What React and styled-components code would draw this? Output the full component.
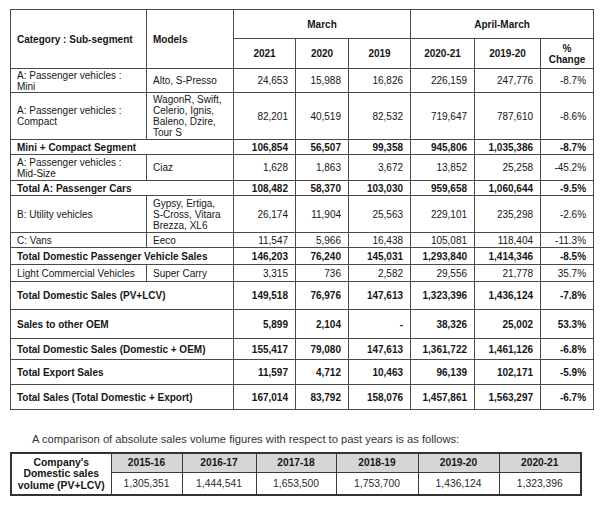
import React from 'react'
import styled, { createGlobalStyle } from 'styled-components'

const GlobalStyle = createGlobalStyle`
    body {
        margin: 0;
        background: #ffffff;
        font-family: "Liberation Sans", Arial, sans-serif;
        color: #161616;
    }
`

const Page = styled.div`
    padding: 9px 0 0 10px;
    width: 590px;
`

const SalesTable = styled.table`
    border-collapse: collapse;
    table-layout: fixed;
    width: 583px;
    font-size: 10px;
    line-height: 1.1;
    border: 1px solid #3a3a3a;
`

const HeadCell = styled.th`
    border: 1px solid #4a4a4a;
    font-weight: bold;
    text-align: ${props => props.$align || 'center'};
    padding: 0 6px;
    vertical-align: middle;
    white-space: pre-line;
`

const Row = styled.tr`
    height: ${props => props.$h}px;
`

const Cell = styled.td`
    border: 1px solid #4a4a4a;
    padding: ${props => props.$align === 'right' ? '0 7px 0 4px' : '0 6px'};
    text-align: ${props => props.$align || 'left'};
    font-weight: ${props => props.$bold ? 'bold' : 'normal'};
    vertical-align: middle;
    white-space: pre-line;
`

const Note = styled.p`
    margin: 23px 0 7px 22px;
    font-size: 11.2px;
    color: #333333;
`

const VolumeTable = styled.table`
    border-collapse: collapse;
    table-layout: fixed;
    width: 570px;
    font-size: 10.3px;
    line-height: 1.1;
    border: 2px solid #333333;
`

const VolHead = styled.th`
    border: 1px solid #3a3a3a;
    background: ${props => props.$shade ? '#d6d6d6' : '#ffffff'};
    font-size: ${props => props.$shade ? '10.2px' : '10.4px'};
    font-weight: bold;
    text-align: center;
    padding: 0 2px;
    height: 18px;
`

const VolCell = styled.td`
    border: 1px solid #3a3a3a;
    text-align: center;
    height: 19px;
    color: #2a2a2a;
`

const colWidths = [136, 87, 62, 53, 62, 64, 66, 53]

const rows = [
    { cat: 'A: Passenger vehicles :\nMini', model: 'Alto, S-Presso', v: ['24,653', '15,988', '16,826', '226,159', '247,776', '-8.7%'], h: 24 },
    { cat: 'A: Passenger vehicles :\nCompact', model: 'WagonR, Swift,\nCelerio, Ignis,\nBaleno, Dzire,\nTour S', v: ['82,201', '40,519', '82,532', '719,647', '787,610', '-8.6%'], h: 47 },
    { label: 'Mini + Compact Segment', v: ['106,854', '56,507', '99,358', '945,806', '1,035,386', '-8.7%'], h: 15 },
    { cat: 'A: Passenger vehicles :\nMid-Size', model: 'Ciaz', v: ['1,628', '1,863', '3,672', '13,852', '25,258', '-45.2%'], h: 26 },
    { label: 'Total A: Passenger Cars', v: ['108,482', '58,370', '103,030', '959,658', '1,060,644', '-9.5%'], h: 15 },
    { cat: 'B: Utility vehicles', model: 'Gypsy, Ertiga,\nS-Cross, Vitara\nBrezza, XL6', v: ['26,174', '11,904', '25,563', '229,101', '235,298', '-2.6%'], h: 37 },
    { cat: 'C: Vans', model: 'Eeco', v: ['11,547', '5,966', '16,438', '105,081', '118,404', '-11.3%'], h: 15 },
    { label: 'Total Domestic Passenger Vehicle Sales', v: ['146,203', '76,240', '145,031', '1,293,840', '1,414,346', '-8.5%'], h: 17 },
    { cat: 'Light Commercial Vehicles', model: 'Super Carry', v: ['3,315', '736', '2,582', '29,556', '21,778', '35.7%'], h: 17 },
    { label: 'Total Domestic Sales (PV+LCV)', v: ['149,518', '76,976', '147,613', '1,323,396', '1,436,124', '-7.8%'], h: 28 },
    { label: 'Sales to other OEM', v: ['5,899', '2,104', '-', '38,326', '25,002', '53.3%'], h: 29 },
    { label: 'Total Domestic Sales (Domestic + OEM)', v: ['155,417', '79,080', '147,613', '1,361,722', '1,461,126', '-6.8%'], h: 21 },
    { label: 'Total Export Sales', v: ['11,597', '4,712', '10,463', '96,139', '102,171', '-5.9%'], h: 25 },
    { label: 'Total Sales (Total Domestic + Export)', v: ['167,014', '83,792', '158,076', '1,457,861', '1,563,297', '-6.7%'], h: 25 },
]

const volumes = [
    ['2015-16', '1,305,351'],
    ['2016-17', '1,444,541'],
    ['2017-18', '1,653,500'],
    ['2018-19', '1,753,700'],
    ['2019-20', '1,436,124'],
    ['2020-21', '1,323,396'],
]
const volWidths = [100, 71, 74, 80, 82, 81, 82]

const App = () => {
    return (
        <Page>
            <GlobalStyle />
            <SalesTable>
                <colgroup>
                    {colWidths.map((w, i) => <col key={i} style={{ width: w }} />)}
                </colgroup>
                <thead>
                    <Row $h={29}>
                        <HeadCell rowSpan={2} $align='left'>Category : Sub-segment</HeadCell>
                        <HeadCell rowSpan={2} $align='left'>Models</HeadCell>
                        <HeadCell colSpan={3}>March</HeadCell>
                        <HeadCell colSpan={3}>April-March</HeadCell>
                    </Row>
                    <Row $h={30}>
                        <HeadCell>2021</HeadCell>
                        <HeadCell>2020</HeadCell>
                        <HeadCell>2019</HeadCell>
                        <HeadCell>2020-21</HeadCell>
                        <HeadCell>2019-20</HeadCell>
                        <HeadCell>{'%\nChange'}</HeadCell>
                    </Row>
                </thead>
                <tbody>
                    {rows.map((row, i) => (
                        <Row key={i} $h={row.h}>
                            {row.label ?
                                <Cell colSpan={2} $bold>{row.label}</Cell> :
                                <>
                                    <Cell>{row.cat}</Cell>
                                    <Cell>{row.model}</Cell>
                                </>
                            }
                            {row.v.map((val, j) => (
                                <Cell key={j} $align='right' $bold={!!row.label}>{val}</Cell>
                            ))}
                        </Row>
                    ))}
                </tbody>
            </SalesTable>

            <Note>A comparison of absolute sales volume figures with respect to past years is as follows:</Note>

            <VolumeTable>
                <colgroup>
                    {volWidths.map((w, i) => <col key={i} style={{ width: w }} />)}
                </colgroup>
                <tbody>
                    <tr>
                        <VolHead rowSpan={2}>Company's<br />Domestic sales<br />volume (PV+LCV)</VolHead>
                        {volumes.map(([year]) => <VolHead key={year} $shade>{year}</VolHead>)}
                    </tr>
                    <tr>
                        {volumes.map(([year, value]) => <VolCell key={year}>{value}</VolCell>)}
                    </tr>
                </tbody>
            </VolumeTable>
        </Page>
    )
}

export default App
